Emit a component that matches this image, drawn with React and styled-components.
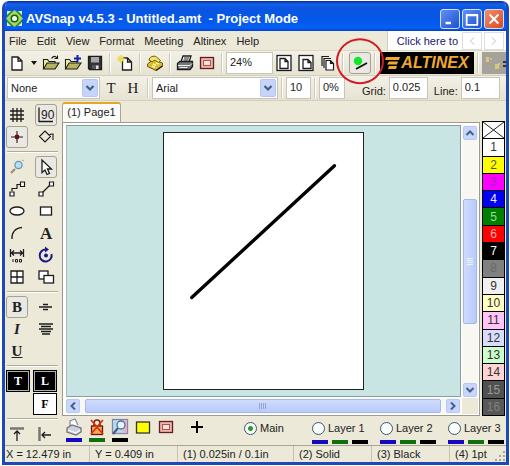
import React, { useState } from 'react'
import styled, { createGlobalStyle, css } from 'styled-components'

const GlobalStyle = createGlobalStyle`
    * {
        box-sizing: border-box;
    }
    body {
        margin: 0;
        background-color: #fff;
        font-family: "Liberation Sans", Arial, sans-serif;
        font-size: 11px;
        color: #222;
    }
    button, input, select {
        font: inherit;
        color: inherit;
        margin: 0;
    }
    svg {
        display: block;
    }
`

const Page = styled.div`
    min-height: 100vh;
    padding: 1px 1px 1px 2px;
    display: flex;
`

const WindowStyle = styled.div`
    flex: 1;
    min-width: 0;
    display: flex;
    flex-direction: column;
    background-color: #ece9d8;
    border: 3px solid #1c48b8;
    border-top: 0;
    border-radius: 7px 7px 0 0;
    overflow: hidden;
`

const TitleBar = styled.header`
    height: 30px;
    flex: none;
    display: flex;
    align-items: center;
    gap: 2px;
    padding: 5px 2px 0 1px;
    background: linear-gradient(#0a2a9c 0, #1560e8 3px, #0a55e0 8px, #0458ea 20px, #0560f4 27px, #0440c8 30px);

    h1 {
        flex: 1;
        margin: 0 0 0 1px;
        font-weight: 700;
        font-size: 13px;
        line-height: 16px;
        color: #fff;
        white-space: pre;
    }
`

const TitleButton = styled.button`
    width: 20px;
    height: 20px;
    padding: 0;
    border: 1px solid #d4e0fa;
    border-radius: 3px;
    background: ${(p) => (p.$close ? 'linear-gradient(135deg, #f09070, #d84a20)' : 'linear-gradient(135deg, #6090f4, #1c50d0)')};
    display: grid;
    place-items: center;
`

const MenuBar = styled.nav`
    height: 20px;
    flex: none;
    display: flex;
    align-items: stretch;
    padding-left: 4px;
    border-bottom: 1px solid #dcd9c8;
`

const MenuItem = styled.button`
    border: 0;
    background: none;
    padding: 0;
    margin-right: 10px;
    line-height: 18px;
`

const AdBox = styled.div`
    margin-left: auto;
    display: flex;
    align-items: center;
    gap: 2px;
    padding: 0 2px 0 9px;
    background-color: #fff;
    border-left: 1px solid #d0cdbd;

    a {
        color: #20206c;
        text-decoration: none;
        margin-right: 2px;
        white-space: nowrap;
    }
    button {
        width: 20px;
        height: 18px;
        padding: 0;
        border: 1px solid #dedede;
        background: #fff;
        display: grid;
        place-items: center;
    }
`

const Toolbar = styled.div`
    height: 25px;
    flex: none;
    display: flex;
    align-items: center;
    padding-left: ${(p) => p.$pad || 1}px;
    background: linear-gradient(#f3f1e6, #e6e3d2);
    border-bottom: 1px solid #d2cfbe;
`

const pressed = css`
    border-color: #a5a294;
    background-color: #e9e8e2;
`

const ToolButton = styled.button`
    width: 22px;
    height: 22px;
    flex: none;
    padding: 0;
    border: 1px solid transparent;
    border-radius: 3px;
    background: none;
    display: grid;
    place-items: center;
    ${(p) => p.$on && pressed}
`

const CaretButton = styled(ToolButton)`
    width: 12px;
`

const Separator = styled.span`
    width: 8px;
    height: 20px;
    flex: none;
    background: linear-gradient(90deg, transparent 3px, #cdcaba 3px, #cdcaba 4px, #fff 4px, #fff 5px, transparent 5px);
`

const TextInput = styled.input`
    width: ${(p) => p.$w}px;
    height: 22px;
    flex: none;
    padding: 0 2px 3px 3px;
    border: 1px solid #c8c5b6;
    background-color: #fff;
`

const Field = styled.label`
    display: flex;
    align-items: flex-end;
    gap: 3px;
    line-height: 16px;
    margin-left: ${(p) => p.$gap}px;
`

const SelectBox = styled.span`
    width: ${(p) => p.$w}px;
    height: 22px;
    flex: none;
    display: grid;
    grid-template-columns: 1fr 16px;
    align-items: center;
    padding: 1px;
    border: 1px solid #c8c5b6;
    background-color: #fff;

    select {
        grid-area: 1 / 1 / 2 / 3;
        height: 18px;
        appearance: none;
        border: 0;
        padding: 0 18px 0 2px;
        background: none;
    }
    svg {
        grid-area: 1 / 2 / 2 / 3;
        pointer-events: none;
    }
`

const SerifLabel = styled.span`
    font-family: "Liberation Serif", serif;
    font-size: 15px;
    line-height: 18px;
    font-weight: ${(p) => (p.$bold ? 700 : 400)};
    font-style: ${(p) => (p.$italic ? 'italic' : 'normal')};
    text-decoration: ${(p) => (p.$underline ? 'underline' : 'none')};
`

const MarkedTool = styled.span`
    position: relative;
    margin: 0 0 0 2px;
`

const RedRing = styled.span`
    position: absolute;
    left: 50%;
    top: 50%;
    width: 48px;
    height: 46px;
    transform: translate(-50%, -54%);
    border: 2px solid #d01c24;
    border-radius: 50%;
    pointer-events: none;
    z-index: 2;
`

const Logo = styled.a`
    width: 94px;
    height: 22px;
    flex: none;
    margin-left: 1px;
    display: flex;
    align-items: center;
    justify-content: center;
    gap: 1px;
    background-color: #000;
    color: #f0a830;
    font-weight: 700;
    font-style: italic;
    font-size: 16px;
    line-height: 20px;
    text-decoration: none;
`

const DisabledTool = styled.button`
    flex: 1;
    min-width: 0;
    height: 22px;
    padding: 0;
    border: 0;
    background-color: #a5a29a;
    overflow: hidden;
`

const Body = styled.div`
    flex: 1;
    display: grid;
    grid-template-columns: 57px 1fr 26px;
    grid-template-rows: 1fr 29px;
`

const SidebarStyle = styled.aside`
    grid-row: 1 / 3;
    padding: 3px 0 0 1px;
    display: flex;
    flex-direction: column;

    hr {
        width: 51px;
        margin: 3px 0 3px 1px;
        border: 0;
        border-top: 1px solid #aeab9c;
        border-bottom: 1px solid #fff;
    }
`

const ToolGrid = styled.div`
    display: grid;
    grid-template-columns: 22px 22px;
    column-gap: 7px;
`

const SwatchGrid = styled.div`
    display: grid;
    grid-template-columns: 24px 24px;
    gap: 1px 3px;
`

const Swatch = styled.button`
    height: 22px;
    padding: 0;
    font-family: "Liberation Serif", serif;
    font-weight: 700;
    font-size: 12px;
    border: 1px solid #000;
    background-color: ${(p) => (p.$light ? '#fff' : '#000')};
    color: ${(p) => (p.$light ? '#000' : '#fff')};
    box-shadow: inset 0 0 0 1px ${(p) => (p.$light ? '#fff' : '#b0b0b0')};
    grid-column: ${(p) => p.$col};
`

const Workspace = styled.main`
    display: flex;
    flex-direction: column;
    min-width: 0;
`

const Tab = styled.button`
    align-self: flex-start;
    height: 20px;
    width: 59px;
    margin-top: 1px;
    padding: 0 0 3px;
    white-space: nowrap;
    border: 1px solid #a8a698;
    border-top: 2px solid #e4a62c;
    border-bottom: 0;
    border-radius: 3px 3px 0 0;
    background-color: #fcfcfa;
`

const CanvasFrame = styled.div`
    flex: 1;
    display: grid;
    grid-template-columns: 1fr 16px;
    grid-template-rows: 1fr 16px;
    gap: 1px;
    padding: 2px 1px 1px 3px;
    border: 1px solid #9c9a8e;
    background-color: #fff;
`

const Canvas = styled.div`
    min-width: 0;
    min-height: 0;
    padding: 4px;
    display: flex;
    align-items: center;
    justify-content: center;
    background-color: #c8e5e4;
    border: 1px solid #8c9c98;
    border-left-color: #a8b8b4;
`

const Sheet = styled.svg`
    width: 52%;
    aspect-ratio: 202 / 261;
    background-color: #fff;
    border: 1px solid #222;
`

const ScrollBar = styled.div`
    display: flex;
    flex-direction: ${(p) => (p.$vertical ? 'column' : 'row')};
    background-color: #f8f7f1;
    padding: ${(p) => (p.$vertical ? '1px 1px 0' : '1px 1px 1px 0')};

    button {
        width: 14px;
        height: 14px;
        padding: 0;
        border: 1px solid #b8c8f4;
        border-radius: 2px;
        background-color: #c8d6fb;
        display: grid;
        place-items: center;
    }
`

const Thumb = styled.div`
    flex: ${(p) => p.$size};
    display: grid;
    place-items: center;
    background: linear-gradient(${(p) => (p.$vertical ? '90deg' : '180deg')}, #d0dcfd, #b8cafa);
    border: 1px solid #a4b8ec;
    border-radius: 2px;
`

const Space = styled.span`
    flex: ${(p) => p.$size};
`

const Corner = styled.div`
    background-color: #ece9d8;
`

const PaletteStyle = styled.div`
    margin: 20px 1px 0 2px;
    display: grid;
    grid-auto-rows: 1fr;
    gap: 1px;
    padding: 1px;
    background-color: #000;
`

const PaletteCell = styled.button`
    min-height: 0;
    padding: 0;
    border: 0;
    font-size: 12px;
    line-height: 16px;
    background-color: ${(p) => p.$bg};
    color: ${(p) => p.$fg};
    display: grid;
    place-items: center;
    overflow: hidden;
`

const LayerBar = styled.div`
    grid-column: 2 / 4;
    display: flex;
    padding: 2px 2px 0 0;
    white-space: nowrap;
`

const LayerTool = styled.button`
    width: ${(p) => p.$w || 23}px;
    height: 26px;
    padding: 0;
    border: 0;
    background: none;
    display: flex;
    flex-direction: column;
    align-items: center;
    gap: 2px;
`

const Bar = styled.span`
    width: 16px;
    height: 4px;
    background-color: ${(p) => p.$color};
`

const LayerGroup = styled.div`
    margin-left: auto;
    display: flex;
`

const Layer = styled.div`
    width: ${(p) => p.$w}px;
    display: flex;
    flex-direction: column;
    gap: 2px;

    label {
        height: 20px;
        display: flex;
        align-items: center;
        gap: 3px;
    }
    input {
        appearance: none;
        width: 13px;
        height: 13px;
        flex: none;
        border: 1px solid #35586c;
        border-radius: 50%;
        background-color: #fbfdfc;
    }
    input:checked {
        background-image: radial-gradient(#2c9a2c 0 2px, transparent 3px);
    }
    div {
        display: flex;
        gap: 4px;
    }
`

const StatusBar = styled.footer`
    height: 17px;
    flex: none;
    display: grid;
    grid-template-columns: 84fr 88fr 116fr 78fr 78fr 57fr;
    border-top: 1px solid #a8a596;
    line-height: 16px;
    white-space: nowrap;

    span {
        padding-left: 5px;
        border-left: 1px solid #c6c3b3;
    }
    span:first-child {
        padding-left: 1px;
        border-left: 0;
    }
    span:last-child {
        display: flex;
        justify-content: space-between;
    }
    svg {
        align-self: flex-end;
    }
`

const Icon = ({ size = 18, children }) => (
  <svg width={size} height={size} viewBox="0 0 18 18" fill="none" stroke="#1c1c1c" strokeWidth="1.3" aria-hidden="true">
    {children}
  </svg>
)

const AppIcon = () => (
  <svg width="17" height="17" viewBox="0 0 17 17" aria-hidden="true">
    <rect x="1" y="1" width="15" height="15" fill="#2f8a2c" />
    <path d="M8.5 0L17 8.5L8.5 17L0 8.5Z" fill="#a5d860" />
    <path d="M1 1h4L1 5zM16 1v4L12 1zM1 16v-4l4 4zM16 16h-4l4-4z" fill="#d8efc0" />
    <circle cx="8.5" cy="8.5" r="4" fill="#176018" />
    <circle cx="8.5" cy="8.5" r="2.5" fill="#f4fbe8" />
  </svg>
)

const Chevron = ({ d, color = '#44608c', width = 2 }) => (
  <svg width="10" height="10" viewBox="0 0 10 10" fill="none" stroke={color} strokeWidth={width} aria-hidden="true">
    <path d={d} />
  </svg>
)
const UP = 'M1.5 7L5 3.5L8.5 7'
const DOWN = 'M1.5 3L5 6.5L8.5 3'
const LEFT = 'M7 1.5L3.5 5L7 8.5'
const RIGHT = 'M3 1.5L6.5 5L3 8.5'

const SelectArrow = () => (
  <svg width="16" height="18" viewBox="0 0 16 18" aria-hidden="true">
    <rect x="0.5" y="0.5" width="15" height="17" rx="1" fill="#c6d4fa" stroke="#b4c6f4" />
    <path d="M4.5 7L8 10.5L11.5 7" fill="none" stroke="#405c88" strokeWidth="2.2" />
  </svg>
)

const docPath = 'M4 3h6l4 4v9H4zM10 3v4h4'

const FolderIcon = ({ plus }) => (
  <Icon>
    <path d="M1.5 15V5.5h4l1.5 2h6V9" fill="#f4f0a8" strokeWidth="1.1" />
    <path d="M1.5 15L5 9h12l-4 6z" fill="#b8b45c" strokeWidth="1.1" />
    {plus ? <path d="M13.5 1v7M10 4.5h7" stroke="#1420b4" strokeWidth="2" /> : <path d="M9.5 4.5c2-3 4-2.5 5.5-.5M15.5 1.5v3h-3" strokeWidth="1.1" />}
  </Icon>
)

const SaveIcon = () => (
  <Icon>
    <path d="M2.5 2.5h13v13h-12l-1-1z" fill="#333" />
    <path d="M5 3h8v5.5H5z" fill="#a8a8a8" stroke="none" />
    <path d="M6 11h7v4H6z" fill="#555" stroke="none" />
    <path d="M10 11.5h2.5V15H10z" fill="#ddd" stroke="none" />
  </Icon>
)

const NewStarIcon = () => (
  <Icon>
    <path d="M6.5 4h5l4 4v8h-9zM11.5 4v4h4" fill="#fff" />
    <path d="M5 1v8M1 5h8M2.2 2.2l5.6 5.6M7.8 2.2L2.2 7.8" stroke="#e8dc50" strokeWidth="1.4" />
  </Icon>
)

const PhoneIcon = () => (
  <Icon>
    <path d="M1.5 10L7 5.5l9.5 3.5v3L10 16.5l-8.5-4z" fill="#d8bc30" stroke="#6c5a10" strokeWidth="1" />
    <path d="M3 6c0-3 5-5 7.5-3l4 3.5-2 2-3-2c-1.5-.5-2.5 0-3 1.5z" fill="#f6e468" stroke="#6c5a10" strokeWidth="1" />
    <path d="M7 10l3 1.3M6 12l3 1.3M10 9l3 1" stroke="#fff8b0" strokeWidth="1.4" />
    <path d="M10 16.5l6.5-4.5" stroke="#222" strokeWidth="1.5" />
  </Icon>
)

const PrintIcon = () => (
  <Icon>
    <path d="M5 8l2-6h8l-2 6z" fill="#fff" />
    <path d="M8 4h5M7.5 6h5" strokeWidth="1" />
    <path d="M1.5 9.5L4 7.5h12.5v5L14 15.5H1.5z" fill="#777" />
    <path d="M2 11.5h12l2-2M3.5 13.5h8" stroke="#eee" strokeWidth="1" />
  </Icon>
)

const PinkIcon = () => (
  <Icon>
    <rect x="2.5" y="3.5" width="13" height="11" fill="#f3b4ac" stroke="#5c2020" />
    <rect x="5.5" y="6.5" width="7" height="5" fill="#fbe4dc" stroke="#b0504c" strokeWidth="1" />
  </Icon>
)

const FramedDocIcon = ({ wide }) => (
  <Icon>
    <rect x="2" y="1.5" width="14" height="15" fill="#fff" strokeWidth="1.3" />
    <path d={wide ? 'M6 5.5h5l3 3v6H6zM11 5.5v3h3' : 'M5 4.5h5l3 3v7H5zM10 4.5v3h3'} />
  </Icon>
)

const CopiesIcon = () => (
  <Icon>
    <path d="M3 12V2.5h7M5 14V4.5h7" strokeWidth="1.2" />
    <path d="M7 6.5h4.5l3 3V16H7zM11.5 6.5v3h3" fill="#fff" strokeWidth="1.2" />
  </Icon>
)

const LogoStripes = () => (
  <svg width="15" height="12" viewBox="0 0 15 12" fill="#f0a830" aria-hidden="true">
    <path d="M1 0h14l-1 3H0zM4 4.5h9l-1 3H2zM4 9h8l-1 3H3z" />
  </svg>
)

const snapTools = [
  ['Grid', <path d="M5 2v14M9 2v14M13 2v14M2 5h14M2 9h14M2 13h14" />],
  ['Right angles', <><path d="M2 1.5V15.5H16" /><text x="4" y="13" fontSize="12" fill="#222" stroke="none" fontFamily="Liberation Sans">90</text></>, true],
  ['Snap to point', <><path d="M9 3v12M3 9h12" strokeWidth="1.1" /><circle cx="9" cy="9" r="2.4" fill="#6c0c14" stroke="none" /></>, true],
  ['Rotate shape', <path d="M2.5 8.5L8 3l5.5 5.5L8 14zM12 7.5l2-1.5h2v6" strokeWidth="1.1" />],
]

const drawTools = [
  ['Zoom', <><path d="M3 15l4-4" stroke="#a08870" strokeWidth="2.2" /><circle cx="10.5" cy="7" r="3.6" fill="#b4e0f4" stroke="#7094b0" /><path d="M14 2l2 1" stroke="#94b8d0" /></>],
  ['Select', <path d="M5 2v12.5l3-2.5 2 4.5 2.5-1-2-4.5h4z" fill="#fff" />, true],
  ['Elbow connector', <><path d="M4 11V8.5h5V4.5h4" strokeWidth="1.2" /><path d="M2 12h4v4H2zM12.5 2h4v4.5h-4z" fill="#fff" strokeWidth="1.2" /></>],
  ['Line connector', <><path d="M5 13L13 5" strokeWidth="1.2" /><path d="M2 12h4v4H2zM12.5 2h4v4h-4z" fill="#fff" strokeWidth="1.2" /></>],
  ['Ellipse', <ellipse cx="9" cy="9" rx="7" ry="4" fill="#fff" />],
  ['Rectangle', <rect x="3.5" y="5" width="11" height="8" fill="#fff" />],
  ['Arc', <path d="M4 15C3.5 9 7 4 14 3.5" />],
  ['Text', <text x="3" y="15" fontSize="17" fontWeight="700" fill="#222" stroke="none" fontFamily="Liberation Serif">A</text>],
  ['Dimension', <><path d="M2.5 3v8M15.5 3v8M3 7h12M6 4.5L3.5 7L6 9.5M12 4.5L14.5 7L12 9.5" /><path d="M5 13v3M7.5 13.5h2v2.5h-2zM11.5 13.5h2v2.5h-2z" strokeWidth="1" /></>],
  ['Rotate', <><path d="M14.5 8A6 6 0 1 1 9 3.5" stroke="#1c1c84" strokeWidth="2" /><path d="M8 0.5l4 3-4 3z" fill="#1c1c84" stroke="none" /><circle cx="9" cy="9.5" r="2" fill="#1c1c84" stroke="none" /></>],
  ['Table', <path d="M3 3h12v12H3zM9 3v12M3 9h12" fill="#fff" />],
  ['Bring forward', <><rect x="2" y="3" width="9" height="8" fill="#fff" /><rect x="7" y="7.5" width="9.5" height="7.5" fill="#fff" /></>],
]

const paletteColors = [
  ['#ffffff', '#333'],
  ['#ffff00', '#555'],
  ['#ff00ff', '#a428ac'],
  ['#0000f4', '#eee'],
  ['#008000', '#a0d8a0'],
  ['#ff0000', '#f4b0b0'],
  ['#000000', '#fff'],
  ['#808080', '#686868'],
  ['#f0f0f0', '#333'],
  ['#ffffc4', '#333'],
  ['#ffc4f8', '#333'],
  ['#d8dcff', '#333'],
  ['#ccffcc', '#333'],
  ['#ffd4d4', '#333'],
  ['#505050', '#9a9a9a'],
  ['#585858', '#808080'],
]

const barColors = ['#1408c0', '#107010', '#000']

const layers = ['Main', 'Layer 1', 'Layer 2', 'Layer 3']

const ToolSet = ({ tools }) => (
  <ToolGrid>
    {tools.map(([name, shape, on]) => (
      <ToolButton key={name} $on={on} aria-label={name}><Icon>{shape}</Icon></ToolButton>
    ))}
  </ToolGrid>
)

const Sidebar = () => (
  <SidebarStyle>
    <ToolSet tools={snapTools} />
    <hr />
    <ToolSet tools={drawTools} />
    <hr />
    <ToolGrid>
      <ToolButton $on><SerifLabel $bold>B</SerifLabel></ToolButton>
      <ToolButton aria-label="Center vertically"><Icon><path d="M2 9h13M6 6.5h5M6 11.5h5" /></Icon></ToolButton>
      <ToolButton><SerifLabel $bold $italic>I</SerifLabel></ToolButton>
      <ToolButton aria-label="Center text"><Icon><path d="M2 4h14M4 6.5h10M2 9h14M4 11.5h10M5 14h8" /></Icon></ToolButton>
      <ToolButton><SerifLabel $bold $underline>U</SerifLabel></ToolButton>
    </ToolGrid>
    <hr />
    <SwatchGrid>
      <Swatch $col={1}>T</Swatch>
      <Swatch $col={2}>L</Swatch>
      <Swatch $col={2} $light>F</Swatch>
    </SwatchGrid>
    <hr />
    <ToolGrid>
      <ToolButton aria-label="Align top"><Icon><path d="M2 3.5h14" stroke="#777" strokeWidth="2.5" /><path d="M9 16V6M6 9l3-3 3 3" /></Icon></ToolButton>
      <ToolButton aria-label="Align left"><Icon><path d="M2.5 2v14" stroke="#777" strokeWidth="2.5" /><path d="M14 10H5M8 7l-3 3 3 3" /></Icon></ToolButton>
    </ToolGrid>
  </SidebarStyle>
)

const Palette = () => (
  <PaletteStyle>
    <PaletteCell $bg="#fff" aria-label="No color">
      <svg width="21" height="16" viewBox="0 0 21 16" stroke="#222" aria-hidden="true"><path d="M0 0L21 16M21 0L0 16" /></svg>
    </PaletteCell>
    {paletteColors.map(([bg, fg], i) => (
      <PaletteCell key={bg} $bg={bg} $fg={fg}>{i + 1}</PaletteCell>
    ))}
  </PaletteStyle>
)

const Drawing = () => (
  <CanvasFrame>
    <Canvas>
      <Sheet viewBox="0 0 200 259" role="img" aria-label="Page with a line">
        <path d="M28 166L172 33" stroke="#000" strokeWidth="3.4" strokeLinecap="round" />
      </Sheet>
    </Canvas>
    <ScrollBar $vertical>
      <button aria-label="Scroll up"><Chevron d={UP} /></button>
      <Space $size={59} />
      <Thumb $vertical $size={125}>
        <svg width="6" height="8" viewBox="0 0 6 8" stroke="#eef3ff" aria-hidden="true"><path d="M0 .5h6M0 2.5h6M0 4.5h6M0 6.5h6" /></svg>
      </Thumb>
      <Space $size={59} />
      <button aria-label="Scroll down"><Chevron d={DOWN} /></button>
    </ScrollBar>
    <ScrollBar>
      <button aria-label="Scroll left"><Chevron d={LEFT} /></button>
      <Space $size={5} />
      <Thumb $size={356}>
        <svg width="8" height="6" viewBox="0 0 8 6" stroke="#8ca4e0" aria-hidden="true"><path d="M.5 0v6M2.5 0v6M4.5 0v6M6.5 0v6" /></svg>
      </Thumb>
      <Space $size={5} />
      <button aria-label="Scroll right"><Chevron d={RIGHT} /></button>
    </ScrollBar>
    <Corner />
  </CanvasFrame>
)

const Layers = () => {
  const [layer, setLayer] = useState('Main')
  return (
    <LayerBar>
      <LayerTool aria-label="Print layer">
        <Icon>
          <path d="M5 9V3l5-2 3 6" fill="#fff" stroke="#8c8ca0" />
          <path d="M2 10l5-3 9 3v4l-5 3-9-3z" fill="#d0d0d8" stroke="#70707c" />
          <path d="M3 12l8 3 4-3" stroke="#f8f8ff" />
        </Icon>
        <Bar $color={barColors[0]} />
      </LayerTool>
      <LayerTool aria-label="Lock layer">
        <Icon>
          <rect x="3.5" y="8" width="11" height="8.5" fill="#f4a860" stroke="#6c1808" />
          <path d="M6 8V5a3 3 0 0 1 6 0v3" stroke="#7c2008" strokeWidth="1.6" />
          <path d="M3 2l12 14M15 2L3 16" stroke="#d83010" strokeWidth="1.7" />
        </Icon>
        <Bar $color={barColors[1]} />
      </LayerTool>
      <LayerTool aria-label="View layer">
        <Icon>
          <rect x="1.5" y="1.5" width="15" height="14" fill="#b4dcec" stroke="#8088a8" />
          <path d="M12 2h4v13h-4z" fill="#e4b4c0" stroke="none" />
          <circle cx="10" cy="7" r="4" fill="#e4f8fc" stroke="#506cae" />
          <path d="M2 16l5-6" stroke="#50547c" strokeWidth="2" />
        </Icon>
        <Bar $color={barColors[2]} />
      </LayerTool>
      <LayerTool aria-label="Fill"><Icon><rect x="2.5" y="4" width="13" height="11" fill="#ffff00" stroke="#333" /></Icon></LayerTool>
      <LayerTool aria-label="Frame"><PinkIcon /></LayerTool>
      <LayerTool $w={40} aria-label="Add layer"><Icon><path d="M9 3v12M3 9h12" stroke="#000" strokeWidth="2" /></Icon></LayerTool>
      <LayerGroup>
        {layers.map((name, i) => (
          <Layer key={name} $w={i === layers.length - 1 ? 56 : 68}>
            <label>
              <input type="radio" name="layer" checked={layer === name} onChange={() => setLayer(name)} />
              {name}
            </label>
            {i > 0 && <div>{barColors.map((c) => <Bar key={c} $color={c} />)}</div>}
          </Layer>
        ))}
      </LayerGroup>
    </LayerBar>
  )
}

const MainToolbar = () => (
  <Toolbar>
    <ToolButton aria-label="New"><Icon><path d={docPath} fill="#fff" /></Icon></ToolButton>
    <CaretButton aria-label="New options"><svg width="6" height="4" aria-hidden="true"><path d="M0 0h6L3 4z" fill="#111" /></svg></CaretButton>
    <ToolButton aria-label="Open"><FolderIcon /></ToolButton>
    <ToolButton aria-label="Add file"><FolderIcon plus /></ToolButton>
    <ToolButton aria-label="Save"><SaveIcon /></ToolButton>
    <Separator />
    <ToolButton aria-label="New page"><NewStarIcon /></ToolButton>
    <Separator />
    <ToolButton aria-label="Call"><PhoneIcon /></ToolButton>
    <Separator />
    <ToolButton aria-label="Print"><PrintIcon /></ToolButton>
    <ToolButton aria-label="Page frame"><PinkIcon /></ToolButton>
    <Separator />
    <TextInput $w={47} defaultValue="24%" aria-label="Zoom" />
    <ToolButton aria-label="Fit page"><FramedDocIcon /></ToolButton>
    <ToolButton aria-label="Fit width"><FramedDocIcon wide /></ToolButton>
    <ToolButton aria-label="Pages"><CopiesIcon /></ToolButton>
    <Separator />
    <MarkedTool>
      <ToolButton $on aria-label="Line mode">
        <Icon><path d="M5 15L16 9" stroke="#111" strokeWidth="1.8" /><circle cx="7" cy="7" r="4.2" fill="#10e828" stroke="none" /></Icon>
      </ToolButton>
      <RedRing />
    </MarkedTool>
    <Separator />
    <Logo href="#altinex"><LogoStripes />ALTINEX</Logo>
    <Separator />
    <DisabledTool disabled aria-label="Connect">
      <svg width="24" height="22" viewBox="0 0 24 22" aria-hidden="true">
        <path d="M4 5h3v5H4zM13 12h4v5h-4z" fill="#d8c878" />
        <path d="M8 7h2M17 11v2" stroke="#e8e0b0" />
        <path d="M21 9h3v2h-3zM21 13h3v2h-3z" fill="#333" />
      </svg>
    </DisabledTool>
  </Toolbar>
)

const FormatToolbar = () => (
  <Toolbar $pad={2}>
    <SelectBox $w={93}>
      <select aria-label="Style"><option>None</option></select>
      <SelectArrow />
    </SelectBox>
    <ToolButton><SerifLabel>T</SerifLabel></ToolButton>
    <ToolButton><SerifLabel>H</SerifLabel></ToolButton>
    <Separator />
    <SelectBox $w={126}>
      <select aria-label="Font"><option>Arial</option></select>
      <SelectArrow />
    </SelectBox>
    <Separator />
    <TextInput $w={25} defaultValue="10" aria-label="Font size" />
    <Separator />
    <TextInput $w={26} defaultValue="0%" aria-label="Fill" />
    <Field $gap={17}>Grid:<TextInput $w={39} defaultValue="0.025" /></Field>
    <Field $gap={6}>Line:<TextInput $w={39} defaultValue="0.1" /></Field>
  </Toolbar>
)

const App = () => {
  return (
    <>
      <GlobalStyle />
      <Page>
        <WindowStyle>
          <TitleBar>
            <AppIcon />
            <h1>{'AVSnap v4.5.3 - Untitled.amt  - Project Mode'}</h1>
            <TitleButton aria-label="Minimize"><Icon size={16}><path d="M4 13.5h6" stroke="#fff" strokeWidth="3" /></Icon></TitleButton>
            <TitleButton aria-label="Maximize"><Icon size={16}><path d="M3 4.5h12v11H3zM3 5h12" stroke="#fff" strokeWidth="2" /></Icon></TitleButton>
            <TitleButton $close aria-label="Close"><Icon size={16}><path d="M4 4l10 10M14 4L4 14" stroke="#fff" strokeWidth="2.2" /></Icon></TitleButton>
          </TitleBar>
          <MenuBar>
            {['File', 'Edit', 'View', 'Format', 'Meeting', 'Altinex', 'Help'].map((m) => <MenuItem key={m}>{m}</MenuItem>)}
            <AdBox>
              <a href="#ad">Click here to</a>
              <button aria-label="Previous"><Chevron d={LEFT} color="#c0c0c8" width={1} /></button>
              <button aria-label="Next"><Chevron d={RIGHT} color="#c0c0c8" width={1} /></button>
            </AdBox>
          </MenuBar>
          <MainToolbar />
          <FormatToolbar />
          <Body>
            <Sidebar />
            <Workspace>
              <Tab>(1) Page1</Tab>
              <Drawing />
            </Workspace>
            <Palette />
            <Layers />
          </Body>
          <StatusBar>
            <span>X = 12.479 in</span>
            <span>Y = 0.409 in</span>
            <span>(1) 0.025in / 0.1in</span>
            <span>(2) Solid</span>
            <span>(3) Black</span>
            <span>
              (4) 1pt
              <svg width="11" height="11" viewBox="0 0 11 11" fill="#aaa798" aria-hidden="true">
                <path d="M8 0h2v2H8zM4 4h2v2H4zM8 4h2v2H8zM0 8h2v2H0zM4 8h2v2H4zM8 8h2v2H8z" />
              </svg>
            </span>
          </StatusBar>
        </WindowStyle>
      </Page>
    </>
  )
}

export default App
